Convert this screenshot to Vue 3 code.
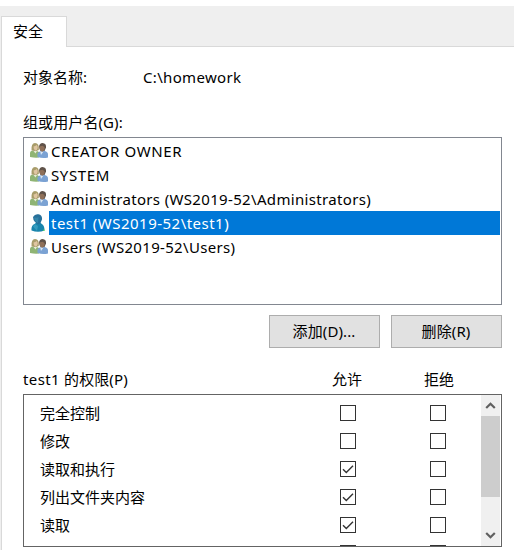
<script setup>
const principals = [
  { name: 'CREATOR OWNER', kind: 'group', cls: 'n-creator' },
  { name: 'SYSTEM', kind: 'group', cls: 'n-system' },
  { name: 'Administrators (WS2019-52\\Administrators)', kind: 'group', cls: 'n-admins' },
  { name: 'test1 (WS2019-52\\test1)', kind: 'user', cls: 'n-test', selected: true },
  { name: 'Users (WS2019-52\\Users)', kind: 'group', cls: 'n-users' },
]
const permissions = [
  { name: '完全控制', allow: false },
  { name: '修改', allow: false },
  { name: '读取和执行', allow: true },
  { name: '列出文件夹内容', allow: true },
  { name: '读取', allow: true },
  { name: '', allow: false },
]
</script>

<template>
  <div class="window">
    <header class="tabs">
      <div class="tab">安全</div>
      <div class="tab-rest"></div>
    </header>
    <main class="panel">
      <div class="object"><span class="object-label">对象名称:</span><span class="path">C:\homework</span></div>
      <div class="group-label">组或用户名(G):</div>
      <ul class="list">
        <li v-for="p in principals" :key="p.name" :class="{ selected: p.selected }">
          <svg v-if="p.kind === 'group'" class="icon" viewBox="0 0 18 16">
            <path d="M0 14V9.500Q0 8 3 7.500H6L9 9V14.500Q5 15 0 14Z" fill="#8fb474" />
            <path d="M3.500 8L5.500 10.500L7 8Z" fill="#e8ead8" />
            <path d="M1.500 7.500Q1 0 5 0Q9.500 0 8.800 7L6.500 8Z" fill="#a89c6a" />
            <path d="M3.500 3.500Q5.500 3.300 6.500 2Q8 3 7.700 5Q7 7.800 5.500 7.800Q3.300 6.500 3.500 3.500Z" fill="#dfc5a2" />
            <path d="M7.500 14V10.500Q8.500 8.500 11 8H14.500Q18 8.500 18 11.500V14.500Q13 15.800 7.500 14Z" fill="#7ba2d3" />
            <path d="M10.200 8.500L11 12L13.500 8.500Z" fill="#dce8f3" />
            <path d="M9 3.500Q9.500 0 12.500 0Q16.500 .3 16 4.500L14.500 8H10.500Z" fill="#5f5249" />
            <path d="M9.200 3.500L12.500 2.800L14.500 4Q15 7.800 12.500 8.800Q9.400 8.500 9.200 3.500Z" fill="#8f7059" />
          </svg>
          <svg v-else class="icon user" viewBox="0 0 18 18">
            <path d="M1.500 16.500Q1 11.500 4.500 10L6.500 8.500H10L12.500 10.500Q14.500 12 14.500 16.500Q8 19 1.500 16.500Z" fill="#1984ac" />
            <path d="M3 3Q5-.5 8.500 .3Q12.500 1 12 5.500L10.500 9L8 10.500L5 8Q3 6 3 3Z" fill="#28709a" />
            <path d="M4 3.500Q7.500 4 8.500 3L8 9L5 7Z" fill="#3385aa" />
            <path d="M5 10L8 12L7 17L3 12.500Z" fill="#359bbe" />
            <path d="M13.500 15.500H14.500V17H13.500Z" fill="#53e746" />
          </svg>
          <span class="name"><span :class="p.cls">{{ p.name }}</span></span>
        </li>
      </ul>
      <div class="buttons">
        <button type="button">添加(D)...</button>
        <button type="button">删除(R)</button>
      </div>
      <div class="perm-head">
        <span class="perm-title"><span class="perm-user">test1</span> 的权限(P)</span><span class="allow-head">允许</span><span>拒绝</span>
      </div>
      <div class="perm-box">
        <div class="rows">
          <div v-for="p in permissions" :key="p.name" class="row">
            <span class="perm-name">{{ p.name }}</span>
            <span class="check">
              <svg v-if="p.allow" viewBox="0 0 14 14"><path d="M2 7.200L5.300 10.500L12 3.800" /></svg>
            </span>
            <span class="check"></span>
          </div>
        </div>
        <div class="scrollbar">
          <svg class="arrow" viewBox="0 0 19 21"><path d="M5.200 13L9.500 8.700L13.800 13" /></svg>
          <div class="thumb"></div>
          <svg class="arrow down" viewBox="0 0 19 21"><path d="M5.200 8L9.500 12.300L13.800 8" /></svg>
        </div>
      </div>
    </main>
  </div>
</template>

<style>
body { margin: 0; background: #fff; }
</style>

<style scoped>
* { box-sizing: border-box; }
.window {
  width: 514px; height: 550px; padding-top: 6px; overflow: hidden;
  display: flex; flex-direction: column;
  font: 15px/20px "Noto Sans", "Noto Sans CJK SC", sans-serif; color: #000; background: #fff;
}
.tabs { height: 41px; padding: 10px 0 0 1px; display: flex; background: #efefef; flex: none; }
.tab { width: 66px; padding: 4px 0 0 11px; border: 1px solid #d9d9d9; border-width: 1px 1px 0; background: #fff; }
.tab-rest { flex: 1; border-bottom: 1px solid #d9d9d9; }
.panel { flex: 1; margin-left: 1px; border-left: 1px solid #d9d9d9; padding: 20px 12px 0 21px; box-shadow: -1px 0 #efefef; }
.object { height: 20px; display: flex; }
.object-label { width: 120px; }
.path { letter-spacing: 0.33px; }
.group-label { height: 20px; margin-top: 25px; letter-spacing: 0.1px; }
.list { list-style: none; margin: 5px 0 0; padding: 1px 1px 0 6px; height: 168px; border: 1px solid #828790; }
li { height: 24px; display: flex; }
.icon { width: 18px; height: 16px; margin: 4px 1px 0 0; flex: none; }
.icon.user { height: 18px; margin-top: 3px; }
.name { flex: 1; padding-left: 2px; line-height: 24px; white-space: nowrap; }
.selected .name { background: #0078d7; color: #fff; }
.n-creator { letter-spacing: 0.6px; }
.n-system { letter-spacing: 0.6px; }
.n-admins { letter-spacing: 0.34px; }
.n-test { letter-spacing: 0.48px; }
.n-users { letter-spacing: 0.32px; }
.buttons { display: flex; justify-content: flex-end; gap: 11px; margin-top: 10px; }
button { width: 111px; height: 33px; padding: 0 1px 2px 0; border: 1px solid #adadad; background: #e1e1e1; color: #000; font: inherit; letter-spacing: 0.1px; }
.perm-head { display: flex; height: 20px; margin-top: 21px; }
.perm-title { width: 309px; letter-spacing: 0.1px; }
.perm-user { letter-spacing: 0.4px; }
.allow-head { width: 92px; }
.perm-box { height: 153px; margin-top: 5px; border: 1px solid #646464; display: flex; overflow: hidden; padding-right: 1px; }
.rows { flex: 1; padding-top: 4px; overflow: hidden; }
.row { height: 28px; display: flex; align-items: flex-start; padding: 6px 0 0 16px; }
.perm-name { width: 300px; line-height: 16px; flex: none; }
.check { width: 16px; height: 16px; border: 1px solid #333; margin-right: 74px; flex: none; }
.check svg { display: block; width: 14px; height: 14px; }
.check path { fill: none; stroke: #333; stroke-width: 1.4; }
.scrollbar { width: 19px; display: flex; flex-direction: column; background: #f0f0f0; flex: none; }
.arrow { width: 19px; height: 21px; flex: none; }
.arrow path { fill: none; stroke: #606060; stroke-width: 2.2; }
.thumb { height: 81px; background: #cdcdcd; flex: none; }
.down { margin-top: auto; }
</style>
